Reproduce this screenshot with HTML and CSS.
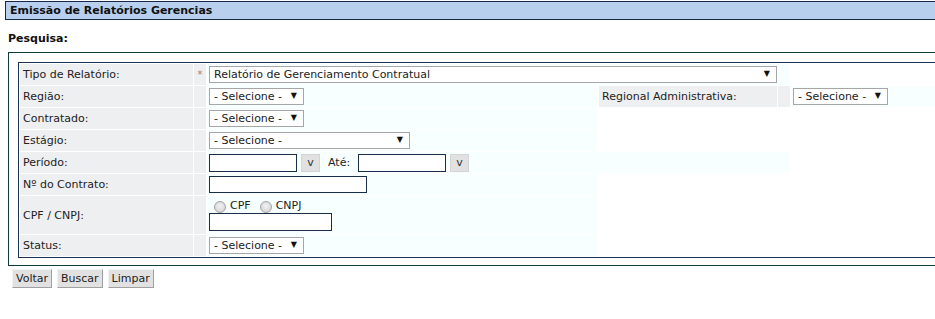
FILE: index.html
```html
<!DOCTYPE html>
<html lang="pt-BR">

<head>
    <meta charset="UTF-8">
    <title>Emissão de Relatórios Gerenciais</title>
    <link rel="stylesheet" href="styles.css">
</head>

<body>
    <div class="pagina">
        <div class="titulo">Emissão de Relatórios Gerencias</div>
        <p class="pesquisa">Pesquisa:</p>

        <div class="quadro">
            <table class="filtros">
                <colgroup>
                    <col class="c-rot">
                    <col class="c-obr">
                    <col class="c-val">
                    <col class="c-rot2">
                    <col class="c-obr2">
                    <col>
                </colgroup>
                <tr>
                    <td class="rot">Tipo de Relatório:</td>
                    <td class="obr">*</td>
                    <td class="val" colspan="3">
                        <span class="sel"><select class="largo">
                                <option>Relatório de Gerenciamento Contratual</option>
                            </select></span>
                    </td>
                </tr>
                <tr>
                    <td class="rot">Região:</td>
                    <td class="obr"></td>
                    <td class="val">
                        <span class="sel"><select>
                                <option>- Selecione -</option>
                            </select></span>
                    </td>
                    <td class="rot">Regional Administrativa:</td>
                    <td class="obr"></td>
                    <td class="val">
                        <span class="sel"><select>
                                <option>- Selecione -</option>
                            </select></span>
                    </td>
                </tr>
                <tr>
                    <td class="rot">Contratado:</td>
                    <td class="obr"></td>
                    <td class="val">
                        <span class="sel"><select>
                                <option>- Selecione -</option>
                            </select></span>
                    </td>
                </tr>
                <tr>
                    <td class="rot">Estágio:</td>
                    <td class="obr"></td>
                    <td class="val">
                        <span class="sel"><select class="medio">
                                <option>- Selecione -</option>
                            </select></span>
                    </td>
                </tr>
                <tr>
                    <td class="rot">Período:</td>
                    <td class="obr"></td>
                    <td class="val" colspan="3">
                        <div class="periodo">
                            <input type="text" class="data">
                            <button type="button" class="cal">v</button>
                            <span class="ate">Até:</span>
                            <input type="text" class="data">
                            <button type="button" class="cal">v</button>
                        </div>
                    </td>
                </tr>
                <tr>
                    <td class="rot">Nº do Contrato:</td>
                    <td class="obr"></td>
                    <td class="val"><input type="text" class="contrato"></td>
                </tr>
                <tr>
                    <td class="rot">CPF / CNPJ:</td>
                    <td class="obr"></td>
                    <td class="val doc">
                        <div class="radios">
                            <label><input type="radio" name="doc"> CPF</label>
                            <label><input type="radio" name="doc"> CNPJ</label>
                        </div>
                        <input type="text" class="cpf">
                    </td>
                </tr>
                <tr>
                    <td class="rot">Status:</td>
                    <td class="obr"></td>
                    <td class="val">
                        <span class="sel"><select>
                                <option>- Selecione -</option>
                            </select></span>
                    </td>
                </tr>
            </table>
        </div>

        <div class="acoes">
            <button type="button">Voltar</button>
            <button type="submit">Buscar</button>
            <button type="reset">Limpar</button>
        </div>
    </div>
</body>

</html>
```

FILE: styles.css
```css
html,
body {
    overflow: hidden;
}

body {
    margin: 0;
    font-family: "DejaVu Sans", Verdana, sans-serif;
    font-size: 11px;
    color: #222;
    background-color: white;
}

.pagina {
    width: 960px;
    padding: 1px 0 0 5px;
}

.titulo {
    background-color: #b8cfee;
    border: 1px solid #16294a;
    color: #111;
    font-weight: bold;
    line-height: 17px;
    padding: 0 4px;
}

.pesquisa {
    margin: 12px 0 0 3px;
    font-weight: bold;
    line-height: 13px;
    color: #111;
}

.quadro {
    margin: 7px 0 0 3px;
    border: 1px solid #103a3c;
    padding: 9px 9px 7px;
}

.filtros {
    width: 100%;
    table-layout: fixed;
    border: 1px solid #1a3150;
    border-spacing: 1px;
}

.c-rot {
    width: 173px;
}

.c-obr {
    width: 12px;
}

.c-val {
    width: 391px;
}

.c-rot2 {
    width: 178px;
}

.c-obr2 {
    width: 12px;
}

.filtros td {
    height: 21px;
    padding: 0;
    vertical-align: middle;
    white-space: nowrap;
}

.rot {
    background-color: #eeeff1;
    padding-left: 3px !important;
}

.obr {
    background-color: #eeeff1;
    color: #b9822e;
    text-align: center;
    font-size: 10px;
}

.val {
    background-color: #f7ffff;
    padding-left: 2px !important;
}

.sel {
    position: relative;
    display: inline-block;
    vertical-align: middle;
}

.sel::after {
    content: "\25BC";
    position: absolute;
    right: 7px;
    top: 3px;
    font-size: 8px;
    color: #111;
    pointer-events: none;
}

select {
    appearance: none;
    -webkit-appearance: none;
    display: block;
    width: 95px;
    height: 17px;
    border: 1px solid #a6a6a6;
    border-radius: 0;
    background-color: white;
    color: #222;
    font: inherit;
    padding: 0 16px 0 4px;
}

select.largo {
    width: 568px;
}

select.medio {
    width: 201px;
}

input[type="text"] {
    height: 18px;
    box-sizing: border-box;
    border: 1px solid #1a2d4a;
    background-color: white;
    margin: 0;
    padding: 0 2px;
    font: inherit;
    vertical-align: middle;
}

.periodo {
    display: flex;
    align-items: center;
}

.data {
    width: 88px;
}

.cal {
    width: 19px;
    height: 18px;
    margin: 0 0 0 4px;
    padding: 0;
    border: 1px solid #d4d4d4;
    background-color: #e1e1e1;
    color: #333;
    font: inherit;
    line-height: 14px;
}

.ate {
    margin: 0 8px 0 8px;
}

.contrato {
    width: 158px;
    height: 17px !important;
}

.filtros td.doc {
    padding-top: 2px;
    padding-bottom: 3px;
}

.radios {
    display: flex;
    height: 15px;
    align-items: center;
    gap: 9px;
    padding-left: 5px;
}

.radios label {
    display: flex;
    align-items: center;
    gap: 4px;
}

input[type="radio"] {
    appearance: none;
    -webkit-appearance: none;
    width: 12px;
    height: 12px;
    margin: 2px 0 0 0;
    border: 1px solid #a3a3a3;
    border-radius: 50%;
    background: radial-gradient(circle at 50% 40%, #f2f2f2, #cdcdcd);
}

.cpf {
    display: block;
    width: 123px;
}

.acoes {
    display: flex;
    gap: 5px;
    margin: 3px 0 0 7px;
}

.acoes button {
    height: 19px;
    padding: 0 3px;
    border: 1px solid;
    border-color: #f2f2f2 #a0a0a0 #a0a0a0 #f2f2f2;
    background-color: #e1e1e1;
    color: #222;
    font: inherit;
}
```
